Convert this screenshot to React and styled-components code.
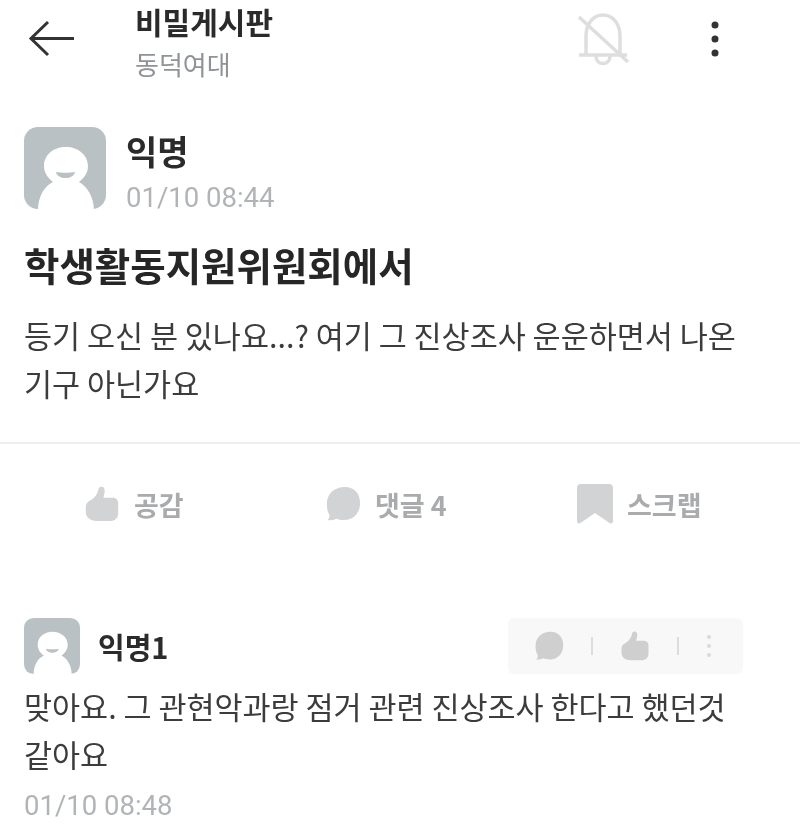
import { createGlobalStyle } from "styled-components";
import styled from "styled-components";

const GlobalStyle = createGlobalStyle`
  html, body {
    margin: 0;
    padding: 0;
    background: #fff;
  }
  body {
    font-family: "Noto Sans CJK KR", "Noto Sans", sans-serif;
    color: #222;
  }
`;

const Page = styled.div`
  width: 800px;
  height: 825px;
  overflow: hidden;
  background: #fff;
  filter: blur(0.7px);
`;

const Header = styled.header`
  display: flex;
  align-items: flex-start;
  height: 127px;
  box-sizing: border-box;
  padding: 0 0 0 28px;
`;

const BackButton = styled.div`
  width: 107px;
  padding-top: 19px;
`;

const HeaderTitles = styled.div`
  width: 442px;
`;

const BoardName = styled.div`
  font-size: 30px;
  font-weight: 700;
  line-height: 40px;
  margin-top: 1px;
  color: #2a2a2a;
`;

const SchoolName = styled.div`
  font-size: 26px;
  line-height: 36px;
  margin-top: 5px;
  color: #8f9396;
`;

const BellButton = styled.div`
  width: 133px;
  padding-top: 12px;
`;

const DotsButton = styled.div`
  padding-top: 19px;
`;

const Post = styled.section`
  padding: 0 0 0 24px;
`;

const AuthorRow = styled.div`
  display: flex;
  align-items: flex-start;
  gap: 20px;
`;

const AuthorText = styled.div`
  padding-top: 1px;
`;

const AuthorName = styled.div`
  font-size: 34px;
  font-weight: 700;
  line-height: 46px;
  color: #2b2b2b;
`;

const DateText = styled.div`
  font-family: Roboto, "Liberation Sans", sans-serif;
  font-size: 27.5px;
  line-height: 34px;
  color: #b1b4b6;
  margin-top: ${(props) => props.top || 4}px;
`;

const PostTitle = styled.h1`
  margin: 21px 0 0;
  font-size: 38.5px;
  font-weight: 700;
  line-height: 56px;
  color: #262626;
`;

const BodyText = styled.p`
  margin: ${(props) => props.top || 0}px 0 0;
  font-size: 30.500px;
  line-height: 48px;
  color: #3c3c3c;
  width: 770px;
`;

const Divider = styled.div`
  height: 2px;
  background: #eeeeee;
  margin-top: 35px;
`;

const Actions = styled.div`
  display: flex;
  align-items: center;
  height: 60px;
  margin-top: 30px;
  padding-left: 84px;
`;

const Action = styled.div`
  display: flex;
  align-items: center;
  gap: ${(props) => props.gap}px;
  width: ${(props) => props.width}px;
  font-size: 27px;
  font-weight: 700;
  color: #a9abad;
`;

const Comment = styled.section`
  padding: 0 0 0 24px;
  margin-top: 84px;
`;

const CommentHead = styled.div`
  display: flex;
  align-items: center;
  height: 56px;
`;

const CommentName = styled.div`
  flex: 1;
  margin-left: 18px;
  font-size: 29px;
  font-weight: 700;
  color: #2b2b2b;
`;

const CommentTools = styled.div`
  display: flex;
  align-items: center;
  box-sizing: border-box;
  width: 235px;
  height: 56px;
  margin-right: 57px;
  padding-left: 26px;
  background: #f8f8f8;
  border-radius: 6px;
`;

const ToolSep = styled.div`
  width: 2px;
  height: 18px;
  background: #dddddd;
  margin: 0 ${(props) => props.right}px 0 ${(props) => props.left}px;
`;

const Avatar = ({ size }) => (
  <svg width={size} height={size} viewBox="0 0 82 82" style={{ display: "block", flexShrink: 0 }}>
    <defs>
      <clipPath id={`av${size}`}>
        <path d="M14 0H68A14 14 0 0 1 82 14V68A14 14 0 0 1 68 82H14A14 14 0 0 1 0 68V14A14 14 0 0 1 14 0Z" />
      </clipPath>
    </defs>
    <g clipPath={`url(#av${size})`}>
      <rect width="82" height="82" fill="#b9c1c5" />
      <path d="M14 84C14 71 19 60 29 55C24 51 20 46 20 39C20 28 29 20 42 20C54 20 64 28 64 39C64 46 60 51 55 55C64 60 70 71 70 84Z" fill="#fff" />
      <path d="M32 45C37 46 46 46 51 45C50 49 46 51 41.500 51C37 51 33 49 32 45Z" fill="#b9c1c5" />
    </g>
  </svg>
);

const ThumbIcon = ({ size, color }) => (
  <svg width={size} height={size} viewBox="0 0 36 40" style={{ display: "block" }}>
    <path
      d="M16 1C19 0 21 2 21 5C21 8 20 11 19.500 13H30C34 13 36 16 36 19V30C36 36 32 39 27 39H12C5 39 0 35 0 29V23C0 19 3 17 6 15.500C10 13 13 9 14 4C14.300 2.500 15 1.300 16 1Z"
      fill={color}
    />
  </svg>
);

const BubbleIcon = ({ size, color }) => (
  <svg width={size} height={size} viewBox="0 0 36 38" style={{ display: "block" }}>
    <path
      d="M20 1C30 1 36 8 36 18C36 29 29 36 19 36C16 36 13 35.500 11 34.500C8 36 5 36.500 2 36C3.500 34 4 32 3.500 30C1.500 27 1 23 1 19C1 8 9 1 20 1Z"
      fill={color}
    />
  </svg>
);

const BookmarkIcon = () => (
  <svg width="36" height="40" viewBox="0 0 36 40" style={{ display: "block" }}>
    <path d="M4 0H32A4 4 0 0 1 36 4V37C36 39.500 34 40 32.500 39L18 29L3.500 39C2 40 0 39.500 0 37V4A4 4 0 0 1 4 0Z" fill="#d2d3d4" />
  </svg>
);

const App = () => (
  <Page>
    <GlobalStyle />
    <Header>
      <BackButton>
        <svg width="48" height="40" viewBox="0 0 48 40" style={{ display: "block" }}>
          <path d="M46 19.500H4M20 3L3 19.500L20 36" fill="none" stroke="#333" strokeWidth="3" />
        </svg>
      </BackButton>
      <HeaderTitles>
        <BoardName>비밀게시판</BoardName>
        <SchoolName>동덕여대</SchoolName>
      </HeaderTitles>
      <BellButton>
        <svg width="54" height="56" viewBox="0 0 54 56" style={{ display: "block" }}>
          <g fill="none" stroke="#dedede" strokeWidth="3.500">
            <path d="M9 43V24C9 12 16 3 26 3C36 3 43 12 43 24V43" />
            <path d="M2 43H50" />
            <path d="M19 44C19 54 33 54 33 44" />
            <path d="M2 5L51 50" />
          </g>
        </svg>
      </BellButton>
      <DotsButton>
        <svg width="10" height="42" viewBox="0 0 10 42" style={{ display: "block" }}>
          <circle cx="5" cy="6" r="3.500" fill="#333" />
          <circle cx="5" cy="20" r="3.500" fill="#333" />
          <circle cx="5" cy="34" r="3.500" fill="#333" />
        </svg>
      </DotsButton>
    </Header>

    <Post>
      <AuthorRow>
        <Avatar size={82} />
        <AuthorText>
          <AuthorName>익명</AuthorName>
          <DateText top={7}>01/10 08:44</DateText>
        </AuthorText>
      </AuthorRow>
      <PostTitle>학생활동지원위원회에서</PostTitle>
      <BodyText top={19}>
        등기 오신 분 있나요...? 여기 그 진상조사 운운하면서 나온
        <br />
        기구 아닌가요
      </BodyText>
    </Post>

    <Divider />

    <Actions>
      <Action width={241} gap={14}>
        <ThumbIcon size={36} color="#d2d3d4" />
        공감
      </Action>
      <Action width={252} gap={14}>
        <BubbleIcon size={36} color="#d2d3d4" />
        댓글 4
      </Action>
      <Action gap={14}>
        <BookmarkIcon />
        스크랩
      </Action>
    </Actions>

    <Comment>
      <CommentHead>
        <Avatar size={56} />
        <CommentName>익명1</CommentName>
        <CommentTools>
          <BubbleIcon size={30} color="#cfcfcf" />
          <ToolSep left={27} right={27} />
          <ThumbIcon size={30} color="#cfcfcf" />
          <ToolSep left={27} right={27} />
          <svg width="6" height="24" viewBox="0 0 6 24" style={{ display: "block" }}>
            <circle cx="3" cy="3" r="2" fill="#dadada" />
            <circle cx="3" cy="12" r="2" fill="#dadada" />
            <circle cx="3" cy="21" r="2" fill="#dadada" />
          </svg>
        </CommentTools>
      </CommentHead>
      <BodyText top={8}>
        맞아요. 그 관현악과랑 점거 관련 진상조사 한다고 했던것
        <br />
        같아요
      </BodyText>
      <DateText top={11}>01/10 08:48</DateText>
    </Comment>
  </Page>
);

export default App;
